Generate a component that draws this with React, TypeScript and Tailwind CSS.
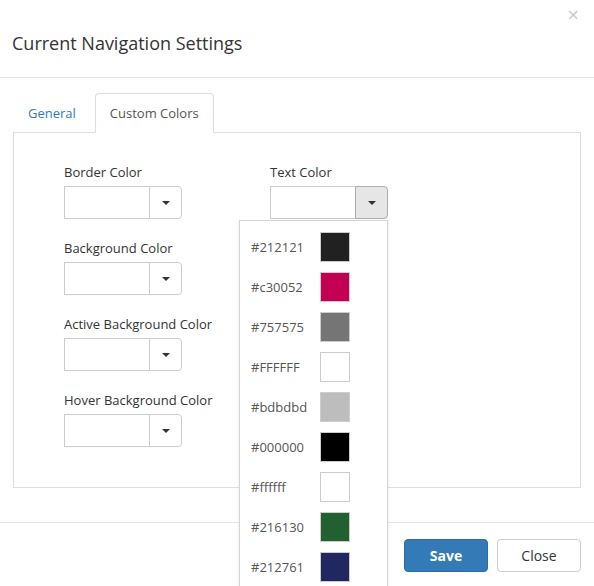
import React from 'react';

const fields = ['Border Color', 'Background Color', 'Active Background Color', 'Hover Background Color'];

const swatches = ['#212121', '#c30052', '#757575', '#FFFFFF', '#bdbdbd', '#000000', '#ffffff', '#216130', '#212761'];

const Caret = () => (
  <span className="block w-0 h-0 border-x-[4px] border-x-transparent border-t-[4px] border-t-[#333]" />
);

const ColorPicker: React.FC<{ open?: boolean }> = ({ open }) => (
  <div className="relative flex w-[118px] h-[33px]">
    <div className="w-[85px] h-full border border-[#ccc] border-r-0 bg-white" />
    <div
      className={
        open
          ? 'flex flex-1 items-center justify-center border border-[#adadad] rounded-r-[4px] bg-[#e6e6e6]'
          : 'flex flex-1 items-center justify-center border border-[#ccc] rounded-r-[4px] bg-white'
      }
    >
      <Caret />
    </div>
    {open && (
      <div className="absolute right-0 top-[34px] z-20 w-[149px] border border-[#d5d5d5] bg-white pt-[6px] shadow-sm">
        {swatches.map((c) => (
          <div key={c} className="flex items-center h-[40px] pl-[11px]">
            <span className="w-[69px] pt-px text-[13px] text-[#555]">{c}</span>
            <span className="w-[30px] h-[30px] border border-[#ccc]" style={{ backgroundColor: c }} />
          </div>
        ))}
      </div>
    )}
  </div>
);

const Field: React.FC<{ label: string; open?: boolean }> = ({ label, open }) => (
  <div className="mb-[20px]">
    <div className="text-[13px] leading-[18px] mb-[5px] text-[#333]">{label}</div>
    <ColorPicker open={open} />
  </div>
);

export default function App() {
  return (
    <div className="w-[594px] h-[586px] overflow-hidden bg-white text-[#333] font-['Open_Sans',sans-serif]">
      <div className="relative h-[78px] border-b border-[#e5e5e5] px-[12px]">
        <button className="absolute right-[15px] top-[3px] text-[20px] leading-[24px] text-[#c8c8c8]">×</button>
        <h1 className="pt-[31px] text-[18px] leading-[24px] text-[#333]">Current Navigation Settings</h1>
      </div>

      <div className="px-[13px] pt-[15px] pb-[34px]">
        <div className="flex h-[39px]">
          <div className="flex items-center pt-[2px] px-[14px] mr-[4px] border border-transparent text-[13px] text-[#337ab7]">
            General
          </div>
          <div className="relative z-10 flex items-center pt-[2px] h-[40px] px-[14px] border border-[#ddd] border-b-white rounded-t-[4px] bg-white text-[13px] text-[#555]">
            Custom Colors
          </div>
        </div>
        <div className="h-[356px] border border-[#ddd] pl-[50px] pt-[30px] flex">
          <div className="w-[206px]">
            {fields.map((f) => (
              <Field key={f} label={f} />
            ))}
          </div>
          <div>
            <Field label="Text Color" open />
          </div>
        </div>
      </div>

      <div className="flex justify-end gap-[9px] border-t border-[#e5e5e5] pt-[16px] px-[13px]">
        <button className="w-[84px] h-[33px] rounded-[4px] border border-[#2e6da4] bg-[#337ab7] text-[14px] font-bold text-white">
          Save
        </button>
        <button className="w-[84px] h-[33px] rounded-[4px] border border-[#ccc] bg-white text-[14px] text-[#333]">
          Close
        </button>
      </div>
    </div>
  );
}
